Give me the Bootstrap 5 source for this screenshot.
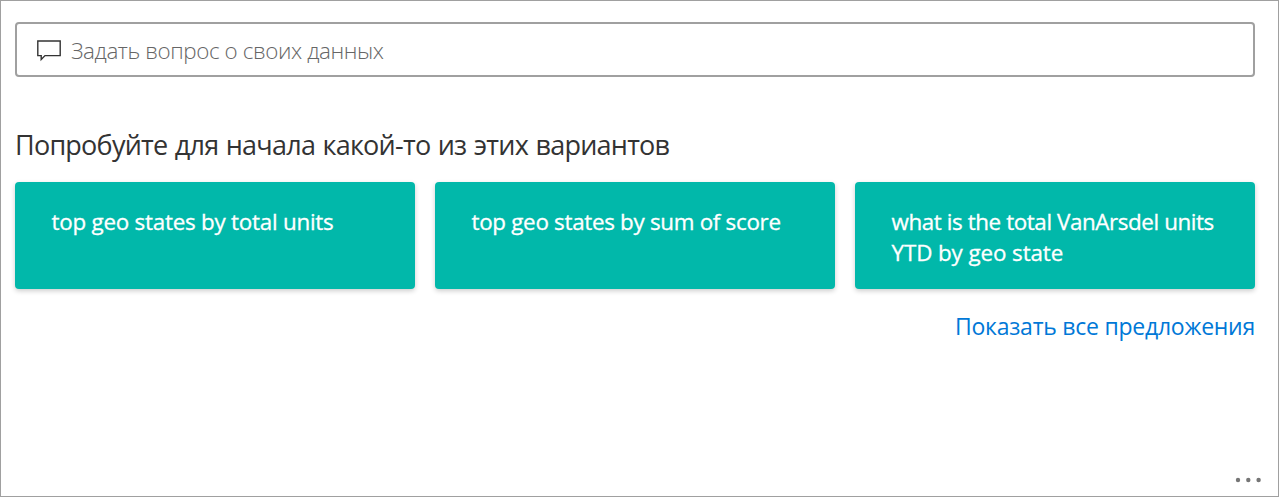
<!DOCTYPE html>
<html lang="ru">
<head>
<meta charset="utf-8">
<meta name="viewport" content="width=device-width, initial-scale=1">
<title>Вопросы и ответы</title>
<link href="https://cdn.jsdelivr.net/npm/bootstrap@5.3.0/dist/css/bootstrap.min.css" rel="stylesheet">
<style>
body{font-family:"Open Sans","Noto Sans",sans-serif;color:#333}
.qa-panel{height:497px;border:1px solid #a0a0a0;padding:21px 23px 0 14px}
.qa-ask{height:55px;border:2px solid #a0a0a0;border-radius:4px;padding:2px 0 0 20px}
.qa-ask input{font-size:22.4px;font-weight:300;line-height:30px;letter-spacing:-.4px;margin-left:10px;color:#666;outline:0}
.qa-ask input::placeholder{color:#666;opacity:1}
.qa-title{font-size:27px;line-height:38px;letter-spacing:-.76px;word-spacing:1.1px;margin:49px 0 18px}
.qa-tiles{gap:20px}
.qa-tile{height:107px;background:#01b8aa;border-radius:4px;padding:24px 20px 0 36.5px;font-size:22.4px;-webkit-text-stroke:.3px #fff;line-height:31px;box-shadow:0 2px 5px rgba(0,0,0,.2)}
.qa-total{letter-spacing:-.24px}
.qa-score{letter-spacing:-.3px}
.qa-units{letter-spacing:-.41px}
.qa-state{letter-spacing:-.1px}
.qa-link{font-size:23px;line-height:31px;letter-spacing:-.24px;margin-top:22px;color:#0078d7}
.qa-more{margin-bottom:13px;margin-right:-7.5px}
</style>
</head>
<body>
<main class="qa-panel d-flex flex-column">
  <label class="qa-ask d-flex align-items-center">
    <svg width="24" height="22" viewBox="0 0 24 22" fill="none" stroke="#333" stroke-width="1.4"><path d="M.8 1H23.2V15.6H8L4.2 19.6V15.6H.8Z"/></svg>
    <input class="border-0 bg-transparent p-0 flex-grow-1" type="text" placeholder="Задать вопрос о своих данных">
  </label>
  <h1 class="qa-title fw-normal">Попробуйте для начала какой-то из этих вариантов</h1>
  <div class="qa-tiles d-flex">
    <div class="qa-tile flex-fill w-100 text-white"><span class="qa-total">top geo states by total units</span></div>
    <div class="qa-tile flex-fill w-100 text-white"><span class="qa-score">top geo states by sum of score</span></div>
    <div class="qa-tile flex-fill w-100 text-white"><span class="qa-units">what is the total VanArsdel units</span><br><span class="qa-state">YTD by geo state</span></div>
  </div>
  <a class="qa-link align-self-end text-decoration-none" href="#">Показать все предложения</a>
  <div class="qa-more mt-auto align-self-end d-flex">
    <svg width="28" height="6" viewBox="0 0 28 6" fill="#767676"><circle cx="3" cy="3" r="2.2"/><circle cx="13.3" cy="3" r="2.2"/><circle cx="23.6" cy="3" r="2.2"/></svg>
  </div>
</main>
<script src="https://cdn.jsdelivr.net/npm/bootstrap@5.3.0/dist/js/bootstrap.bundle.min.js"></script>
</body>
</html>
